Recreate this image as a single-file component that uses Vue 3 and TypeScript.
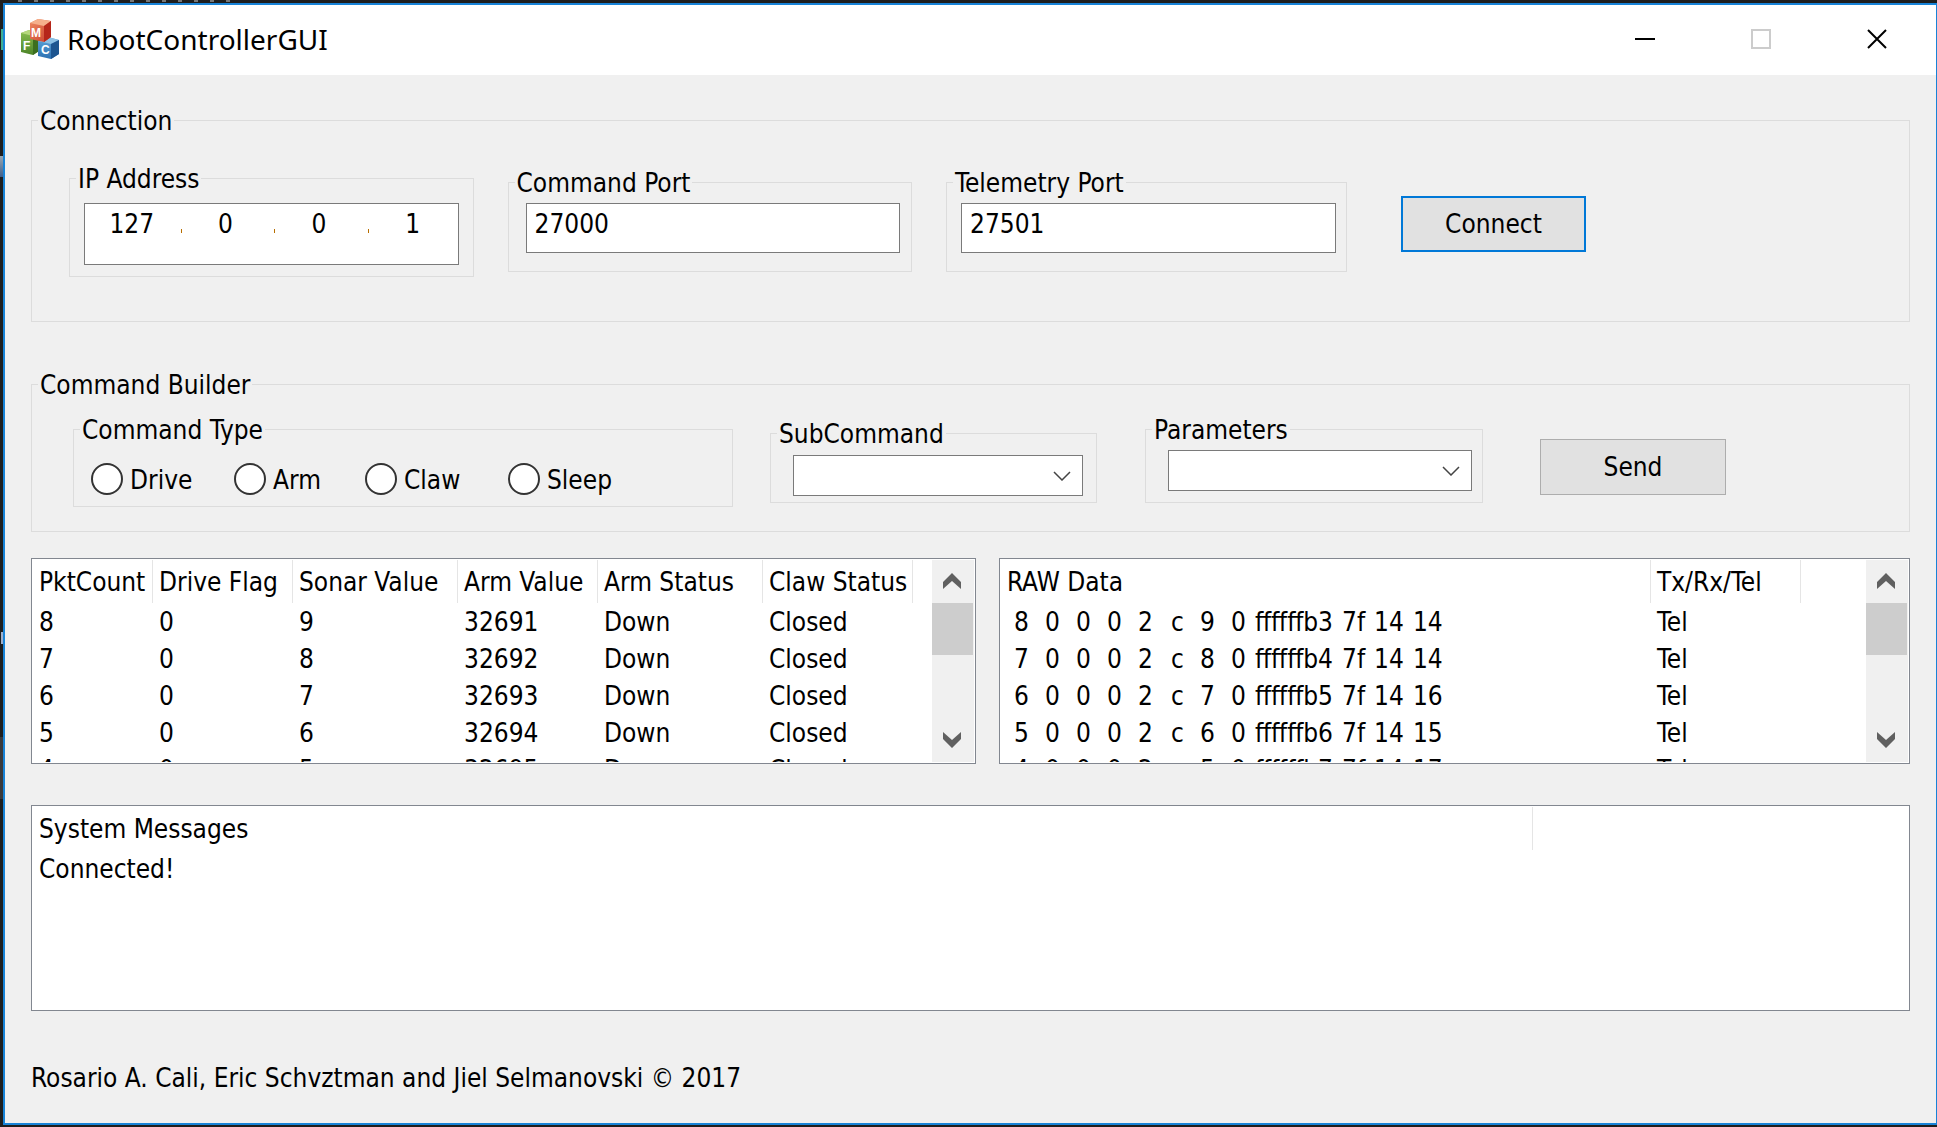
<script setup lang="ts">
import { ref } from 'vue'

interface Column {
  title: string
  width: number
}

interface Packet {
  bytes: string[]
  direction: string
}

const octets = ref<string[]>(['127', '0', '0', '1'])
const commandPort = ref('27000')
const telemetryPort = ref('27501')
const commandType = ref('')
const subCommand = ref('')
const parameters = ref('')

const commandTypes: string[] = ['Drive', 'Arm', 'Claw', 'Sleep']

const telemetryColumns: Column[] = [
  { title: 'PktCount', width: 120 },
  { title: 'Drive Flag', width: 140 },
  { title: 'Sonar Value', width: 165 },
  { title: 'Arm Value', width: 140 },
  { title: 'Arm Status', width: 165 },
  { title: 'Claw Status', width: 150 },
]

const telemetryRows: string[][] = [
  ['8', '0', '9', '32691', 'Down', 'Closed'],
  ['7', '0', '8', '32692', 'Down', 'Closed'],
  ['6', '0', '7', '32693', 'Down', 'Closed'],
  ['5', '0', '6', '32694', 'Down', 'Closed'],
  ['4', '0', '5', '32695', 'Down', 'Closed'],
]

const rawColumns: Column[] = [
  { title: 'RAW Data', width: 650 },
  { title: 'Tx/Rx/Tel', width: 150 },
]

const packets: Packet[] = [
  '8 0 0 0 2 c 9 0 ffffffb3 7f 14 14',
  '7 0 0 0 2 c 8 0 ffffffb4 7f 14 14',
  '6 0 0 0 2 c 7 0 ffffffb5 7f 14 16',
  '5 0 0 0 2 c 6 0 ffffffb6 7f 14 15',
  '4 0 0 0 2 c 5 0 ffffffb7 7f 14 17',
].map((line) => ({ bytes: line.split(' '), direction: 'Tel' }))

const messages = ref<string[]>(['Connected!'])
</script>

<template>
  <div class="desktop">
    <div class="window">
      <header class="titlebar">
        <svg class="app-icon" viewBox="0 0 38 40" aria-hidden="true">
          <defs>
            <linearGradient id="red" x1="0" y1="0" x2="1" y2="1">
              <stop offset="0" stop-color="#ee8a62" /><stop offset="1" stop-color="#c9402c" />
            </linearGradient>
            <linearGradient id="green" x1="0" y1="0" x2="0" y2="1">
              <stop offset="0" stop-color="#8cbf52" /><stop offset="1" stop-color="#4c8428" />
            </linearGradient>
            <linearGradient id="blue" x1="0" y1="0" x2="0" y2="1">
              <stop offset="0" stop-color="#5fa5d8" /><stop offset="1" stop-color="#2c70b2" />
            </linearGradient>
          </defs>
          <path d="M0 14 L8 11 L18 14 V32 L12 36 L0 33 Z" fill="url(#green)" />
          <path d="M0 14 L8 11 L18 14 L12 17 Z" fill="#b5d77c" />
          <path d="M12 17 L18 14 V32 L12 36 Z" fill="#3c6e1f" />
          <path d="M17 22 L27 18 L38 21 V35 L30 40 L17 37 Z" fill="url(#blue)" />
          <path d="M17 22 L27 18 L38 21 L30 25 Z" fill="#8cc0e4" />
          <path d="M30 25 L38 21 V35 L30 40 Z" fill="#1d5590" />
          <path d="M9 4 L17 0 L30 2 V18 L23 23 L9 20 Z" fill="url(#red)" />
          <path d="M9 4 L17 0 L30 2 L23 7 Z" fill="#f5b08c" />
          <path d="M23 7 L30 2 V18 L23 23 Z" fill="#b5261a" />
          <text x="10" y="18" class="cube-letter">M</text>
          <text x="2" y="31" class="cube-letter">F</text>
          <text x="20" y="35" class="cube-letter">C</text>
        </svg>
        <h1 class="title">RobotControllerGUI</h1>
        <div class="window-buttons">
          <button type="button" class="window-button" aria-label="Minimize">
            <svg viewBox="0 0 20 20"><path d="M0 10 H20" stroke="#000" stroke-width="2" /></svg>
          </button>
          <button type="button" class="window-button" aria-label="Maximize" disabled>
            <svg viewBox="0 0 20 20"><rect x="1" y="1" width="18" height="18" fill="none" stroke="#ccc" stroke-width="2" /></svg>
          </button>
          <button type="button" class="window-button" aria-label="Close">
            <svg viewBox="0 0 20 20"><path d="M1 1 L19 19 M19 1 L1 19" stroke="#000" stroke-width="2" /></svg>
          </button>
        </div>
      </header>

      <main class="content">
        <fieldset class="group">
          <legend>Connection</legend>
          <div class="connection">
            <fieldset class="group">
              <legend>IP Address</legend>
              <div class="ip-field">
                <template v-for="(_, i) in octets" :key="i">
                  <span v-if="i > 0" class="ip-dot"></span>
                  <input v-model="octets[i]" class="octet" type="text" maxlength="3" :aria-label="`IP address part ${i + 1}`" />
                </template>
              </div>
            </fieldset>
            <fieldset class="group lower">
              <legend><label for="command-port">Command Port</label></legend>
              <input id="command-port" v-model="commandPort" class="port command" type="text" />
            </fieldset>
            <fieldset class="group lower">
              <legend><label for="telemetry-port">Telemetry Port</label></legend>
              <input id="telemetry-port" v-model="telemetryPort" class="port telemetry" type="text" />
            </fieldset>
            <button type="button" class="push default">Connect</button>
          </div>
        </fieldset>

        <fieldset class="group builder-group">
          <legend>Command Builder</legend>
          <div class="builder">
            <fieldset class="group">
              <legend>Command Type</legend>
              <div class="radios">
                <label v-for="type in commandTypes" :key="type" class="radio">
                  <input v-model="commandType" type="radio" name="command-type" :value="type" />
                  <span>{{ type }}</span>
                </label>
              </div>
            </fieldset>
            <fieldset class="group lower">
              <legend><label for="sub-command">SubCommand</label></legend>
              <div class="combo sub">
                <select id="sub-command" v-model="subCommand"><option value=""></option></select>
                <svg class="chevron" viewBox="0 0 18 10" aria-hidden="true"><path d="M1 1 L9 9 L17 1" /></svg>
              </div>
            </fieldset>
            <fieldset class="group parameters">
              <legend><label for="parameters">Parameters</label></legend>
              <div class="combo param">
                <select id="parameters" v-model="parameters"><option value=""></option></select>
                <svg class="chevron" viewBox="0 0 18 10" aria-hidden="true"><path d="M1 1 L9 9 L17 1" /></svg>
              </div>
            </fieldset>
            <button type="button" class="push send">Send</button>
          </div>
        </fieldset>

        <div class="lists">
          <section class="list telemetry-list" aria-label="Telemetry">
            <div class="list-view">
              <table>
                <colgroup>
                  <col v-for="c in telemetryColumns" :key="c.title" :style="{ width: c.width + 'px' }" />
                </colgroup>
                <thead>
                  <tr><th v-for="c in telemetryColumns" :key="c.title" scope="col">{{ c.title }}</th></tr>
                </thead>
                <tbody>
                  <tr v-for="row in telemetryRows" :key="row[0]">
                    <td v-for="(cell, i) in row" :key="i">{{ cell }}</td>
                  </tr>
                </tbody>
              </table>
            </div>
            <div class="scrollbar">
              <button type="button" class="arrow" aria-label="Scroll up">
                <svg viewBox="0 0 18 16"><path d="M9 0 L18 9 V16 L9 8 L0 16 V9 Z" /></svg>
              </button>
              <div class="track"><div class="thumb"></div></div>
              <button type="button" class="arrow" aria-label="Scroll down">
                <svg viewBox="0 0 18 16"><path d="M9 16 L18 7 V0 L9 8 L0 0 V7 Z" /></svg>
              </button>
            </div>
          </section>

          <section class="list raw-list" aria-label="Raw data">
            <div class="list-view">
              <table>
                <colgroup>
                  <col v-for="c in rawColumns" :key="c.title" :style="{ width: c.width + 'px' }" />
                </colgroup>
                <thead>
                  <tr><th v-for="c in rawColumns" :key="c.title" scope="col">{{ c.title }}</th></tr>
                </thead>
                <tbody>
                  <tr v-for="packet in packets" :key="packet.bytes[0]">
                    <td>
                      <div class="bytes">
                        <span v-for="(byte, i) in packet.bytes" :key="i">{{ byte }}</span>
                      </div>
                    </td>
                    <td>{{ packet.direction }}</td>
                  </tr>
                </tbody>
              </table>
            </div>
            <div class="scrollbar">
              <button type="button" class="arrow" aria-label="Scroll up">
                <svg viewBox="0 0 18 16"><path d="M9 0 L18 9 V16 L9 8 L0 16 V9 Z" /></svg>
              </button>
              <div class="track"><div class="thumb"></div></div>
              <button type="button" class="arrow" aria-label="Scroll down">
                <svg viewBox="0 0 18 16"><path d="M9 16 L18 7 V0 L9 8 L0 0 V7 Z" /></svg>
              </button>
            </div>
          </section>
        </div>

        <section class="list messages" aria-label="Messages">
          <div class="list-view">
            <table>
              <thead>
                <tr><th scope="col">System Messages</th></tr>
              </thead>
              <tbody>
                <tr v-for="m in messages" :key="m"><td>{{ m }}</td></tr>
              </tbody>
            </table>
          </div>
        </section>

        <p class="credits">Rosario A. Cali, Eric Schvztman and Jiel Selmanovski © 2017</p>
      </main>
    </div>
  </div>
</template>

<style>
body {
  background: #1e1e1e;
}
</style>

<style scoped>
* {
  box-sizing: border-box;
}

/* Slivers of the editor behind the window show along its top and left edges. */
.desktop {
  display: flex;
  min-height: 100vh;
  padding: 3px 0 3px 3px;
  background:
    repeating-linear-gradient(90deg, #1e1e1e 0 8px, #777 8px 12px, #1e1e1e 12px 16px) 10px 0 / 232px 2px no-repeat,
    linear-gradient(#3fae94, #3fae94) 1px 29px / 2px 21px no-repeat,
    linear-gradient(#9aa6b0, #3d5f8c) 0 156px / 3px 21px no-repeat,
    linear-gradient(#9fb0cc, #9fb0cc) 1px 632px / 2px 12px no-repeat,
    linear-gradient(#3a3a3c, #3a3a3c) 0 737px / 3px 62px no-repeat,
    #1e1e1e;
  color: #000;
  font: 26px/32px "DejaVu Sans Condensed", "DejaVu Sans", sans-serif;
}

.window {
  flex: 1;
  min-width: 0;
  border: 2px solid #1883d7;
  border-right-width: 1px;
  background: #f0f0f0;
}

.titlebar {
  display: flex;
  align-items: center;
  height: 70px;
  padding: 0 1px 2px 16px;
  background: #fff;
}

.app-icon {
  width: 38px;
  height: 40px;
}

.cube-letter {
  fill: #fff;
  font: bold 12px "Liberation Sans", sans-serif;
}

.title {
  flex: 1;
  margin: 0 0 0 8px;
  font: 28px/40px "Noto Sans", sans-serif;
}

.window-buttons {
  display: flex;
  align-self: stretch;
}

.window-button {
  display: flex;
  align-items: center;
  justify-content: center;
  width: 116px;
  padding: 0;
  border: 0;
  background: none;
}

.window-button svg {
  width: 20px;
  height: 20px;
}

.content {
  padding: 29px 26px;
}

.group {
  min-width: 0;
  margin: 0;
  padding: 0 6px;
  border: 1px solid #dcdcdc;
}

legend {
  height: 32px;
  padding: 0 2px;
  line-height: 34px;
}

.connection {
  display: grid;
  grid-template-columns: 405fr 405fr 401fr 206fr 283fr;
  gap: 34px;
  align-items: start;
  padding: 26px 0 44px 31px;
}

.lower {
  margin-top: 4px;
}

.ip-field {
  display: flex;
  height: 62px;
  margin: 9px 8px 11px;
  padding: 4px 1px 24px 3px;
  border: 1px solid #7a7a7a;
  background: #fff;
}

.octet {
  flex: 1;
  width: 0;
  padding: 0;
  border: 0;
  background: none;
  color: inherit;
  font: inherit;
  text-align: center;
}

.ip-dot {
  width: 1px;
  height: 4px;
  margin: 21px 0 0 5px;
  background: #b86e00;
}

.port {
  display: block;
  height: 50px;
  padding: 4px 8px 12px;
  border: 1px solid #7a7a7a;
  border-radius: 0;
  background: #fff;
  color: inherit;
  font: inherit;
}

.port.command {
  width: calc(100% - 16px);
  margin: 5px 5px 18px 11px;
}

.port.telemetry {
  width: calc(100% - 12px);
  margin: 5px 4px 18px 8px;
}

.push {
  height: 56px;
  padding: 0;
  border: 1px solid #adadad;
  border-radius: 0;
  background: #e1e1e1;
  color: inherit;
  font: inherit;
}

.push.default {
  margin: 34px 0 0 20px;
  border: 2px solid #0078d7;
}

.push.send {
  margin: 26px 0 0 20px;
}

.builder-group {
  margin-top: 46px;
}

.builder {
  display: grid;
  grid-template-columns: 660fr 327fr 349fr 206fr 140fr;
  gap: 37px;
  align-items: start;
  padding: 13px 0 24px 35px;
}

.parameters {
  margin-left: 11px;
}

.radios {
  display: grid;
  grid-template-columns: 143px 131px 143px auto;
  margin: 18px 0 11px 11px;
}

.radio {
  display: flex;
  align-items: center;
  gap: 7px;
}

.radio span {
  height: 32px;
  line-height: 34px;
}

.radio input {
  appearance: none;
  width: 32px;
  height: 32px;
  margin: 0;
  border: 2px solid #333;
  border-radius: 50%;
  background: #fff;
}

.radio input:checked {
  background: radial-gradient(circle, #333 8px, #fff 9px);
}

.combo {
  display: grid;
  align-items: center;
}

.combo.sub {
  margin: 6px 7px 6px 16px;
}

.combo.param {
  margin: 5px 4px 11px 16px;
}

.combo select {
  grid-area: 1 / 1;
  appearance: none;
  width: 100%;
  height: 41px;
  padding: 0 40px 0 8px;
  border: 1px solid #7a7a7a;
  border-radius: 0;
  background: #fff;
  color: inherit;
  font: inherit;
}

.chevron {
  grid-area: 1 / 1;
  justify-self: end;
  width: 18px;
  height: 10px;
  margin-right: 12px;
  fill: none;
  stroke: #444;
  stroke-width: 1.5;
  pointer-events: none;
}

.lists {
  display: flex;
  gap: 23px;
  margin-top: 26px;
}

.list {
  display: flex;
  height: 206px;
  padding: 1px;
  border: 1px solid #828790;
  background: #fff;
}

.telemetry-list {
  flex: 945 1 0;
  min-width: 0;
}

.raw-list {
  flex: 911 1 0;
  min-width: 0;
}

.list-view {
  flex: 1;
  min-width: 0;
  overflow: hidden;
}

table {
  width: 0;
  table-layout: fixed;
  border-collapse: separate;
  border-spacing: 0;
}

.messages table {
  width: 80%;
}

th,
td {
  padding: 0 0 0 6px;
  font-weight: normal;
  text-align: left;
  white-space: nowrap;
}

th {
  height: 43px;
  border-right: 1px solid #e5e5e5;
}

td {
  height: 37px;
}

.bytes {
  display: flex;
  gap: 9px;
}

.bytes span {
  min-width: 22px;
  text-align: right;
}

.scrollbar {
  display: flex;
  flex-direction: column;
  width: 42px;
  background: #f0f0f0;
}

.arrow {
  display: flex;
  align-items: center;
  justify-content: center;
  height: 43px;
  padding: 0 2px 2px 0;
  border: 0;
  background: none;
}

.arrow svg {
  width: 18px;
  height: 16px;
  fill: #606060;
}

.track {
  flex: 1;
}

.thumb {
  width: 41px;
  height: 52px;
  background: #cdcdcd;
}

.messages {
  margin-top: 41px;
}

.credits {
  margin: 51px 0 0;
}
</style>
